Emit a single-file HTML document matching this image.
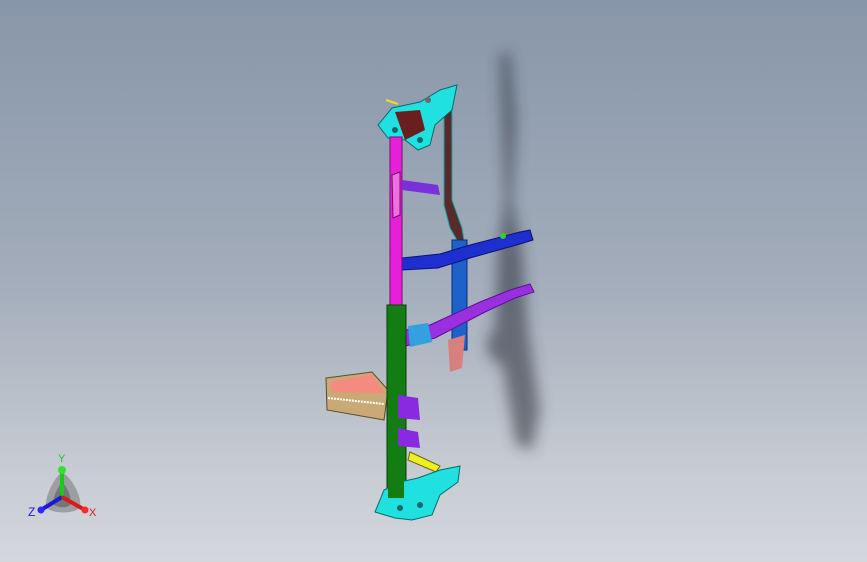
<!DOCTYPE html>
<html><head><style>
html,body{margin:0;padding:0}
body{width:867px;height:562px;overflow:hidden;background:linear-gradient(180deg,#8896a9 0%,#a3adbb 50%,#c8cdd4 85%,#d4d7dc 100%);position:relative;font-family:"Liberation Sans",sans-serif}
svg{position:absolute;left:0;top:0}
</style></head><body>
<svg width="867" height="562" viewBox="0 0 867 562">
<defs>
<filter id="b" x="-50%" y="-50%" width="200%" height="200%"><feGaussianBlur stdDeviation="7"/></filter>
</defs>
<g filter="url(#b)" fill="#2b2f38" opacity="0.55">
<path d="M500 55 L510 52 L516 120 L512 200 L522 250 L528 330 L540 410 L532 450 L516 445 L505 380 L495 320 L498 250 L505 200 L502 120 Z"/>
<ellipse cx="505" cy="345" rx="18" ry="20"/>
</g>
<path d="M444 110 L452 108 L452 200 L462 228 L464 240 L458 242 L450 228 L444 205 Z" fill="#5a2a2a" stroke="#17a6a6" stroke-width="1"/>
<rect x="452" y="240" width="15" height="110" fill="#1d62c8" stroke="#0c2b80" stroke-width="1"/>
<path d="M448 340 L465 335 L462 368 L450 372 Z" fill="#d88080"/>
<path d="M402 258 L440 254 L470 245 L520 232 L530 230 L533 240 L520 244 L470 258 L438 268 L402 270 Z" fill="#1e2ecf" stroke="#0a1470" stroke-width="1"/>
<circle cx="503" cy="236" r="3" fill="#2fd02f"/>
<path d="M406 330 L430 325 L480 302 L510 290 L530 284 L534 292 L515 298 L485 312 L435 338 L406 346 Z" fill="#9a2fe0" stroke="#5a129a" stroke-width="1"/>
<path d="M408 326 L428 323 L432 342 L410 347 Z" fill="#33a0e0"/>
<path d="M378 125 L392 108 L420 102 L440 90 L457 85 L452 110 L435 125 L430 145 L418 150 L405 140 L388 138 Z" fill="#20e0e0" stroke="#0a6a6a" stroke-width="1"/>
<path d="M395 112 L420 110 L425 130 L405 140 Z" fill="#6b1e1e"/>
<circle cx="428" cy="100" r="3" fill="#6a6a6a"/><circle cx="395" cy="130" r="3" fill="#0a6a6a"/><circle cx="420" cy="140" r="3" fill="#0a6a6a"/>
<line x1="386" y1="100" x2="398" y2="104" stroke="#e8e020" stroke-width="2"/>
<rect x="390" y="137" width="12" height="168" fill="#e620d8" stroke="#7a0a70" stroke-width="1"/>
<path d="M392 175 L400 172 L400 215 L393 218 Z" fill="#ee70e0" stroke="#70106a" stroke-width="1"/>
<path d="M402 180 L438 185 L440 195 L402 190 Z" fill="#7a30d8"/>
<path d="M326 378 L372 372 L388 390 L384 420 L327 410 Z" fill="#c9aa76" stroke="#5a4a30" stroke-width="1"/>
<path d="M330 382 L372 374 L385 393 L332 392 Z" fill="#f48a80"/>
<line x1="328" y1="398" x2="384" y2="404" stroke="#fff" stroke-width="2" stroke-dasharray="2 1"/>
<rect x="387" y="305" width="19" height="195" fill="#137d13" stroke="#0a3d0a" stroke-width="1"/>
<path d="M398 395 L418 398 L420 420 L398 418 Z" fill="#8a2ae0"/>
<path d="M398 428 L418 432 L420 448 L398 446 Z" fill="#8a2ae0"/>
<path d="M410 452 L440 466 L436 472 L408 460 Z" fill="#f0f020" stroke="#6a6a10" stroke-width="1"/>
<path d="M375 512 L384 490 L400 482 L418 478 L440 470 L460 466 L458 482 L440 495 L432 515 L412 520 L395 518 Z" fill="#20e0e0" stroke="#0a6a6a" stroke-width="1"/>
<rect x="388" y="478" width="16" height="20" fill="#137d13"/>
<circle cx="400" cy="508" r="3" fill="#0a6a6a"/><circle cx="420" cy="505" r="3" fill="#0a6a6a"/>
<g>
<path d="M62 472 C52 480 44 500 46 508 C55 514 72 514 80 508 C82 498 74 480 62 472 Z" fill="#777" opacity="0.55"/>
<path d="M62 482 C56 490 52 500 54 505 C60 508 66 508 70 505 C72 498 68 488 62 482 Z" fill="#444" opacity="0.45"/>
<line x1="62" y1="497" x2="62" y2="470" stroke="#1cc81c" stroke-width="4"/>
<circle cx="62" cy="470" r="4" fill="#33e033"/>
<line x1="62" y1="497" x2="41" y2="510" stroke="#1a1ad8" stroke-width="4"/>
<circle cx="41" cy="510" r="3.5" fill="#2a2aff"/>
<line x1="62" y1="497" x2="85" y2="510" stroke="#d81a1a" stroke-width="4"/>
<circle cx="85" cy="510" r="3.5" fill="#ff2a2a"/>
<text x="58" y="462" font-size="11" fill="#1cc81c" font-family="Liberation Sans">Y</text>
<text x="28" y="516" font-size="12" fill="#1a1ad8" font-family="Liberation Sans">Z</text>
<text x="89" y="516" font-size="11" fill="#e01a1a" font-family="Liberation Sans">X</text>
</g>
</svg>
</body></html>
